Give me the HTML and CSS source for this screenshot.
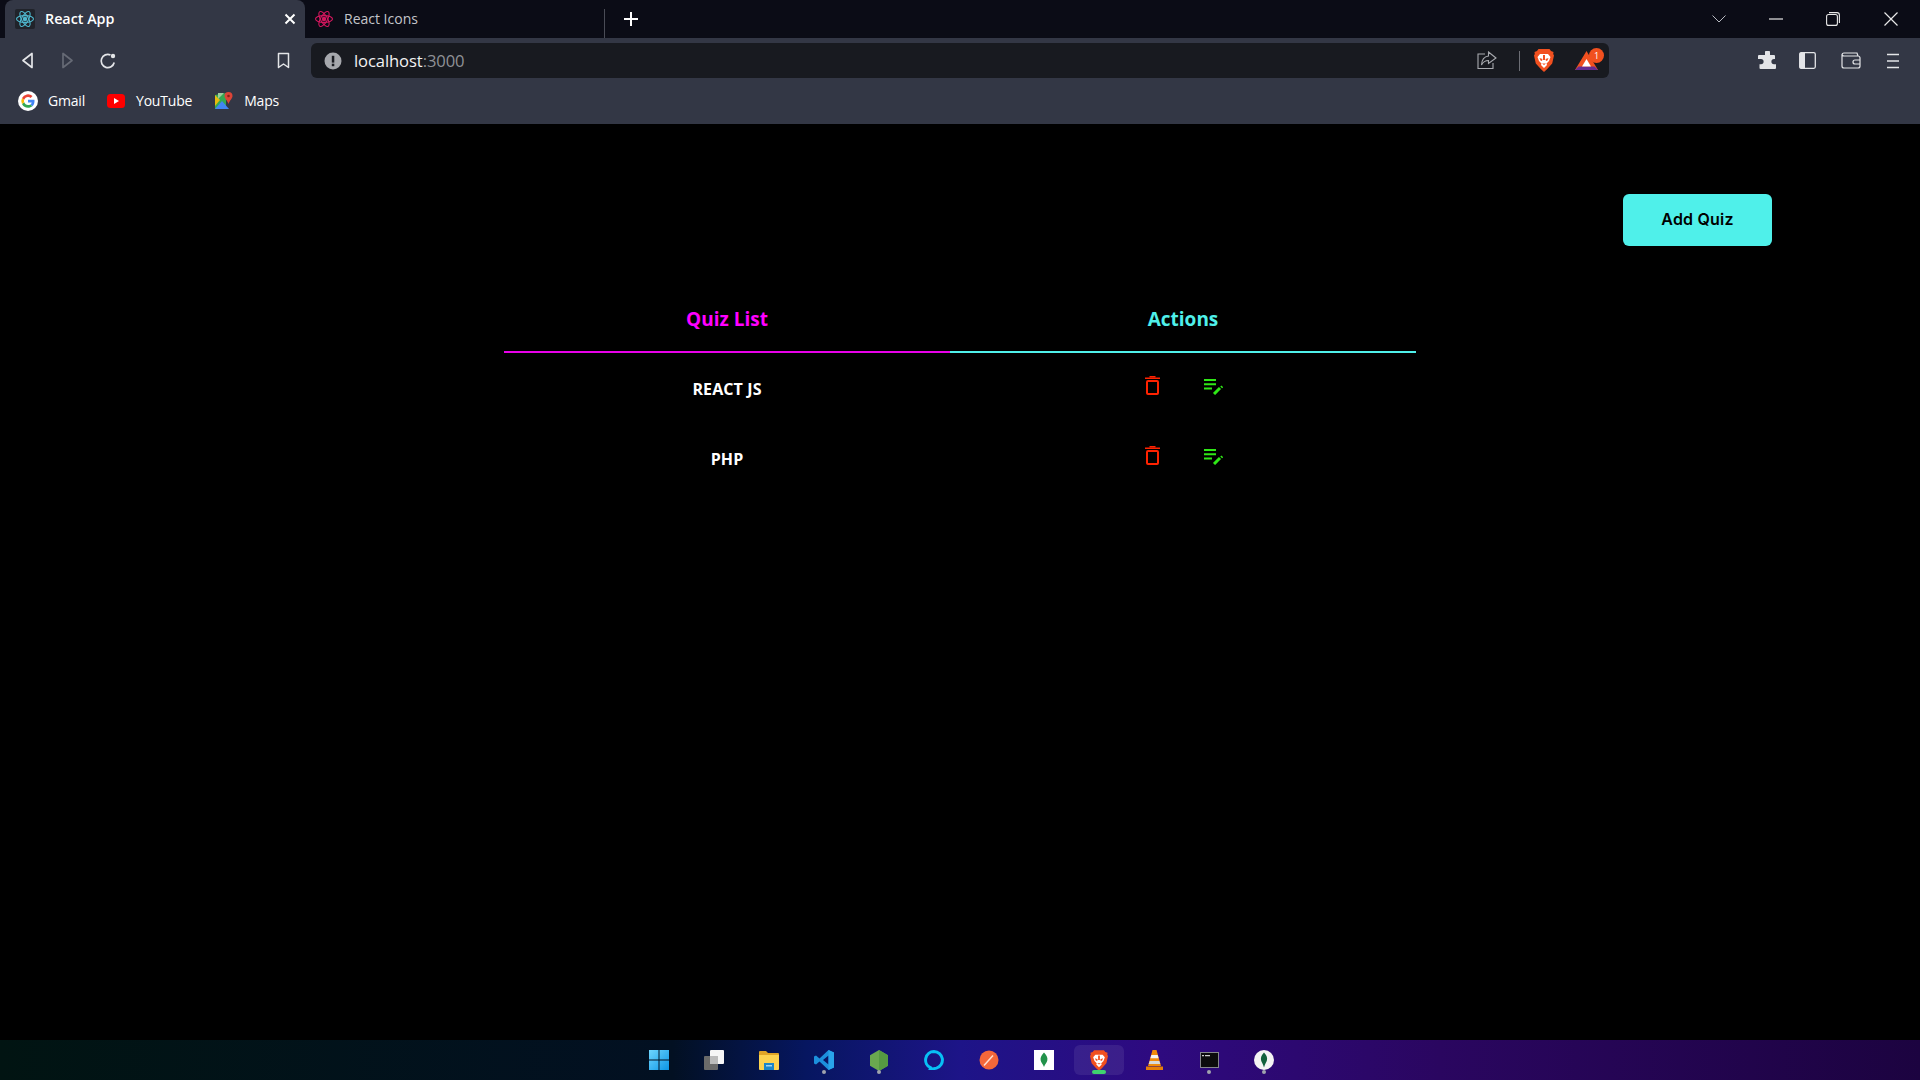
FILE: index.html
```html
<!DOCTYPE html>
<html lang="en">
<head>
    <meta charset="UTF-8">
    <meta name="viewport" content="width=device-width, initial-scale=1.0">
    <title>React App</title>
    <link rel="stylesheet" href="styles.css">
</head>
<body>
    <!-- browser chrome -->
    <div class="tab-strip">
        <div class="tab active">
            <span class="fav-box">
                <svg width="20" height="20" viewBox="0 0 20 20" fill="none" stroke="#4fb8cf" stroke-width="1.1"><ellipse cx="10" cy="10" rx="8.5" ry="3.4"/><ellipse cx="10" cy="10" rx="8.5" ry="3.4" transform="rotate(60 10 10)"/><ellipse cx="10" cy="10" rx="8.5" ry="3.4" transform="rotate(120 10 10)"/><circle cx="10" cy="10" r="1.7" fill="#4fb8cf"/></svg>
            </span>
            <span class="tab-title">React App</span>
            <svg class="tab-close" width="12" height="12" viewBox="0 0 12 12" stroke="#fff" stroke-width="2"><path d="M1.5 1.5l9 9M10.500 1.500l-9 9"/></svg>
        </div>
        <div class="tab inactive">
            <svg width="20" height="20" viewBox="0 0 20 20" fill="none" stroke="#d6175f" stroke-width="1.1"><ellipse cx="10" cy="10" rx="8.500" ry="3.400"/><ellipse cx="10" cy="10" rx="8.500" ry="3.400" transform="rotate(60 10 10)"/><ellipse cx="10" cy="10" rx="8.500" ry="3.400" transform="rotate(120 10 10)"/><circle cx="10" cy="10" r="1.700" fill="#d6175f"/></svg>
            <span class="tab-title dim">React Icons</span>
        </div>
        <div class="new-tab">
            <svg width="16" height="16" viewBox="0 0 16 16" stroke="#fff" stroke-width="2"><path d="M8 1v14M1 8h14"/></svg>
        </div>
        <div class="win-controls">
            <svg width="14" height="8" viewBox="0 0 14 8" fill="none" stroke="#b9bbc2"><path d="M.5.5L7 7l6.500-6.500"/></svg>
            <svg class="win-min" width="14" height="2" viewBox="0 0 14 2" stroke="#e8e8e8" stroke-width="1.200"><path d="M0 1h14"/></svg>
            <svg class="win-max" width="14" height="14" viewBox="0 0 14 14" fill="none" stroke="#e8e8e8" stroke-width="1.100"><rect x=".6" y="2.500" width="10.800" height="10.900" rx="2"/><path d="M3 .6h8a2.400 2.400 0 0 1 2.400 2.400v8"/></svg>
            <svg class="win-close" width="14" height="14" viewBox="0 0 14 14" stroke="#e8e8e8" stroke-width="1.200"><path d="M.5.5l13 13M13.500.5l-13 13"/></svg>
        </div>
    </div>

    <div class="toolbar">
        <div class="nav-btns">
            <svg width="13" height="17" viewBox="0 0 13 17" fill="none" stroke="#e4e5e8" stroke-width="1.700" stroke-linejoin="round"><path d="M11 1.500v14L2 8.500z"/></svg>
            <svg width="13" height="17" viewBox="0 0 13 17" fill="none" stroke="#666a75" stroke-width="1.700" stroke-linejoin="round"><path d="M2 1.500v14l9-7z"/></svg>
            <svg class="reload" width="18" height="18" viewBox="0 0 18 18" fill="none" stroke="#e4e5e8" stroke-width="1.700"><path d="M15.200 10.500A6.600 6.600 0 1 1 11.500 3"/><circle cx="14" cy="4" r="2.200" fill="#e4e5e8" stroke="none"/></svg>
            <svg class="bookmark" width="13" height="17" viewBox="0 0 13 17" fill="none" stroke="#e4e5e8" stroke-width="1.500" stroke-linejoin="round"><path d="M1.500 1.500h10v14l-5-3.500-5 3.500z"/></svg>
        </div>
        <div class="address-bar">
            <svg width="18" height="18" viewBox="0 0 18 18"><circle cx="9" cy="9" r="8.500" fill="#a6a8ad"/><rect x="7.800" y="3.800" width="2.500" height="6.800" fill="#1a1c22"/><rect x="7.800" y="11.700" width="2.500" height="2.500" fill="#1a1c22"/></svg>
            <span class="url">localhost<span class="url-port">:3000</span></span>
            <svg class="share" width="20" height="19" viewBox="0 0 20 19" fill="none" stroke="#a9abb0" stroke-width="1.100"><path d="M8 3H1v14.500h15V12"/><path d="M11.500 1l7.500 6-7.500 5.500V9.500C8 9.500 6 11 4.500 14c.3-5.500 3-8.500 7-9z"/></svg>
            <span class="addr-sep"></span>
            <svg class="brave" width="20" height="23" viewBox="0 0 20 23"><path d="M4.500 0h11L17 2l2.500 1-.3 2 .8 1.500-1.800 8-5 5.500-3.200 3-3.200-3-5-5.500-1.800-8L.8 5 .5 3 3 2z" fill="#f1501f"/><path d="M3.500 8L6 5h8l2.500 3-1.500 4-2.500 2.500.5 1.500-3 3-3-3 .5-1.500L5 12z" fill="#fff"/><path d="M5.500 9l3 1-.5 2-1.500-.5zM14.500 9l-3 1 .5 2 1.500-.5zM9 6h2v5H9zM8 14.500h4L10 16z" fill="#f1501f"/></svg>
            <span class="bat">
                <svg width="23" height="19" viewBox="0 0 23 19"><path d="M11.500 0L23 19H0z" fill="#f1501f"/><path d="M3.500 15.500h16L23 19H0z" fill="#662d91"/><path d="M11.500 8l4.500 7.500H7z" fill="#fff"/></svg>
                <span class="bat-badge">1</span>
            </span>
        </div>
        <div class="ext-btns">
            <svg width="19" height="19" viewBox="0 0 19 19" fill="#e4e5e8"><path d="M7 1.500a2.500 2.500 0 0 1 5 0V4h4a1 1 0 0 1 1 1v3h-1a2.600 2.600 0 0 0 0 5.200h2V17a1 1 0 0 1-1 1H2.500a1 1 0 0 1-1-1v-3.800H3a2.600 2.600 0 0 0 0-5.200H0V5a1 1 0 0 1 1-1h6z"/></svg>
            <svg class="ext-side" width="17" height="17" viewBox="0 0 17 17" fill="none"><rect x=".7" y=".7" width="15.600" height="15.600" rx="1.500" stroke="#e4e5e8" stroke-width="1.300"/><rect x=".7" y=".7" width="5.300" height="15.600" fill="#e4e5e8"/></svg>
            <svg class="ext-wallet" width="20" height="17" viewBox="0 0 20 17" fill="none" stroke="#e4e5e8" stroke-width="1.200"><path d="M1 3v11a2 2 0 0 0 2 2h14a2 2 0 0 0 2-2V6a2 2 0 0 0-2-2H3a2 2 0 0 1-2-1.500A2 2 0 0 1 3 1h13l1 3"/><path d="M19 8h-5a2 2 0 0 0 0 4h5"/></svg>
            <svg class="ext-menu" width="12" height="16" viewBox="0 0 12 16" stroke="#e4e5e8" stroke-width="1.400"><path d="M0 1.500h12M0 8h12M0 14.500h12"/></svg>
        </div>
    </div>

    <div class="bookmarks">
        <div class="bm first">
            <svg width="20" height="20" viewBox="0 0 20 20"><circle cx="10" cy="10" r="10" fill="#fff"/><path d="M16.500 10.200c0-.5 0-1-.1-1.400H10v2.700h3.700a3.200 3.200 0 0 1-1.400 2l2.100 1.700c1.300-1.100 2.100-2.800 2.100-5z" fill="#4285f4"/><path d="M10 16.700c1.800 0 3.300-.6 4.400-1.500l-2.100-1.700c-.6.400-1.400.6-2.300.6-1.800 0-3.200-1.200-3.800-2.800L4 12.900a6.700 6.700 0 0 0 6 3.800z" fill="#34a853"/><path d="M6.200 11.300a4 4 0 0 1 0-2.600L4 7.100a6.700 6.700 0 0 0 0 5.800z" fill="#fbbc05"/><path d="M10 6c1 0 1.900.300 2.600 1l1.900-1.900A6.700 6.700 0 0 0 4 7.100l2.200 1.600C6.800 7.200 8.200 6 10 6z" fill="#ea4335"/></svg>
            <span>Gmail</span>
        </div>
        <div class="bm">
            <svg width="18" height="14" viewBox="0 0 18 14"><rect width="18" height="14" rx="3.500" fill="#f00"/><path d="M7 4l5 3-5 3z" fill="#fff"/></svg>
            <span>YouTube</span>
        </div>
        <div class="bm">
            <svg width="18" height="18" viewBox="0 0 18 18"><path d="M0 3l11-2v16L0 17z" fill="#34a853"/><path d="M0 17l7-8 7 8z" fill="#4285f4"/><path d="M0 3l5 5-5 6z" fill="#fbbc05" opacity=".9"/><path d="M3 1h6l-6 6z" fill="#9ccc9c"/><path d="M13.500 0a4 4 0 0 1 4 4c0 2.500-3 4.500-4 8-1-3.500-4-5.500-4-8a4 4 0 0 1 4-4z" fill="#db4437"/><circle cx="13.500" cy="4" r="1.300" fill="#8c1f17"/></svg>
            <span>Maps</span>
        </div>
    </div>

    <!-- the app -->
    <main class="page">
        <div class="top-row">
            <button class="add-btn">Add Quiz</button>
        </div>
        <table class="quiz-table">
            <thead>
                <tr>
                    <th class="col-list">Quiz List</th>
                    <th class="col-actions">Actions</th>
                </tr>
            </thead>
            <tbody>
                <tr>
                    <td class="quiz-name">REACT JS</td>
                    <td class="actions">
                        <div class="action-btns">
                            <svg width="15" height="19" viewBox="0 0 15 19" fill="none" stroke="#ff2200" stroke-width="2"><path d="M4.500.6h6M0 2.200h15" stroke-width="1.500"/><rect x="2" y="5" width="11" height="13" rx="1"/></svg>
                            <svg class="icon-edit" width="19" height="16" viewBox="0 0 19 16" fill="none" stroke="#2fe816" stroke-width="2"><path d="M0 1h12M0 5.200h12M0 9.500h8"/><path d="M10 15l6-6" stroke-width="3"/><path d="M16.800 7l1.800 1.800" stroke-width="1.600"/></svg>
                        </div>
                    </td>
                </tr>
                <tr>
                    <td class="quiz-name">PHP</td>
                    <td class="actions">
                        <div class="action-btns">
                            <svg width="15" height="19" viewBox="0 0 15 19" fill="none" stroke="#ff2200" stroke-width="2"><path d="M4.500.6h6M0 2.200h15" stroke-width="1.500"/><rect x="2" y="5" width="11" height="13" rx="1"/></svg>
                            <svg class="icon-edit" width="19" height="16" viewBox="0 0 19 16" fill="none" stroke="#2fe816" stroke-width="2"><path d="M0 1h12M0 5.200h12M0 9.500h8"/><path d="M10 15l6-6" stroke-width="3"/><path d="M16.800 7l1.800 1.800" stroke-width="1.600"/></svg>
                        </div>
                    </td>
                </tr>
            </tbody>
        </table>
    </main>

    <!-- windows taskbar -->
    <footer class="taskbar">
        <div class="task">
            <svg width="20" height="20" viewBox="0 0 20 20"><defs><linearGradient id="win" x1="0" y1="0" x2="1" y2="1"><stop offset="0" stop-color="#6fd6ff"/><stop offset="1" stop-color="#0b95e4"/></linearGradient></defs><path fill="url(#win)" d="M0 0h9.500v9.500H0zM10.500 0H20v9.500h-9.500zM0 10.500h9.500V20H0zM10.500 10.500H20V20h-9.500z"/></svg>
        </div>
        <div class="task">
            <svg width="20" height="20" viewBox="0 0 20 20"><rect x="6" y="0" width="14" height="14" rx="1" fill="#f6f6f6"/><rect x="0" y="6" width="14" height="14" rx="1" fill="#6a6a6a"/><rect x="6" y="6" width="8" height="8" fill="#bcbcbc"/></svg>
        </div>
        <div class="task">
            <svg width="20" height="19" viewBox="0 0 20 19"><path d="M0 1a1 1 0 0 1 1-1h6l2 2h10a1 1 0 0 1 1 1v3H0z" fill="#e0a526"/><path d="M0 4h20v14a1 1 0 0 1-1 1H1a1 1 0 0 1-1-1z" fill="#fcd34f"/><path d="M5 12h10v7H5z" fill="#1a86c8"/><path d="M7 14h6v1.500H7z" fill="#9fd4f0"/></svg>
        </div>
        <div class="task dot">
            <svg width="20" height="20" viewBox="0 0 20 20"><path d="M14.500 0L20 2.500v15L14.500 20 5.500 11.500 2 14.500 0 13.500v-7l2-1 3.500 3zM14.500 5.500L9 10l5.500 4.500z" fill="#1c90dc"/><path d="M14.500 0L20 2.500v15L14.500 20z" fill="#29a4ea"/></svg>
        </div>
        <div class="task dot">
            <svg width="18" height="21" viewBox="0 0 18 21"><path d="M9 0l9 5.200v10.600L9 21l-9-5.200V5.200z" fill="#6aa84f"/><path d="M9 0l9 5.200v10.600L9 21z" fill="#559a42"/></svg>
        </div>
        <div class="task">
            <svg width="20" height="20" viewBox="0 0 20 20" fill="none"><path d="M10 1.500a8.500 8.500 0 0 1 2.500 16.600L6 19.500 6.500 17.700A8.500 8.500 0 0 1 10 1.500z" stroke="#08c0f5" stroke-width="3"/></svg>
        </div>
        <div class="task">
            <svg width="20" height="20" viewBox="0 0 20 20"><circle cx="10" cy="10" r="9.500" fill="#f4673a"/><path d="M5 15.500L14 5.500" stroke="#ffe0d2" stroke-width="1.500"/></svg>
        </div>
        <div class="task">
            <svg width="20" height="20" viewBox="0 0 20 20"><rect width="20" height="20" fill="#fff"/><path d="M10 2.500c3 3 3.800 5.500 3.300 8-.4 2-2.300 3.500-3.300 6.500-1-3-2.900-4.500-3.300-6.500-.5-2.500.3-5 3.300-8z" fill="#22924a"/></svg>
        </div>
        <div class="task current">
            <svg width="18" height="21" viewBox="0 0 20 23"><path d="M4.500 0h11L17 2l2.500 1-.3 2 .8 1.500-1.800 8-5 5.500-3.200 3-3.200-3-5-5.500-1.800-8L.8 5 .5 3 3 2z" fill="#f1501f"/><path d="M3.500 8L6 5h8l2.500 3-1.500 4-2.500 2.500.5 1.500-3 3-3-3 .5-1.500L5 12z" fill="#fff"/><path d="M5.500 9l3 1-.5 2-1.500-.5zM14.500 9l-3 1 .5 2 1.500-.5zM9 6h2v5H9zM8 14.500h4L10 16z" fill="#f1501f"/></svg>
            <span class="run-bar"></span>
        </div>
        <div class="task">
            <svg width="17" height="20" viewBox="0 0 17 20"><path d="M6.500 0h4L15 16H2z" fill="#f08a0c"/><path d="M5.300 5h6.400l.9 3.200H4.400z" fill="#f4f4f4"/><path d="M3.600 11h9.800l.9 3H2.700z" fill="#d8d8d8"/><path d="M0 16.500h17V20H0z" fill="#e67e08"/></svg>
        </div>
        <div class="task dot">
            <svg width="19" height="16" viewBox="0 0 19 16"><rect width="19" height="16" fill="#0c0c0c"/><rect x=".5" y=".5" width="18" height="15" fill="none" stroke="#85878c"/><path d="M2 3h2v1.200H2zM5 3h5v1.200H5z" fill="#ccc"/></svg>
        </div>
        <div class="task dot">
            <svg width="20" height="20" viewBox="0 0 20 20"><circle cx="10" cy="10" r="10" fill="#f4f4f4"/><path d="M10 2.500c2.500 2.500 3.500 5 3 7.500-.3 2-2 3.500-3 7.500-1-4-2.700-5.500-3-7.500-.5-2.500.5-5 3-7.500z" fill="#12613c"/></svg>
        </div>
    </footer>
</body>
</html>
```
FILE: styles.css
```css
* {
    box-sizing: border-box;
}
html, body {
    margin: 0;
    height: 100%;
}
body {
    width: 1920px;
    height: 1080px;
    overflow: hidden;
    display: flex;
    flex-direction: column;
    background-color: #000;
    font-family: "Open Sans", "Noto Sans", sans-serif;
    color: #fff;
}
svg {
    display: block;
    flex: none;
}

/* tabs */
.tab-strip {
    height: 38px;
    display: flex;
    background-color: #0b0c16;
}
.tab {
    height: 38px;
    display: flex;
    align-items: center;
}
.active {
    width: 300px;
    margin-left: 5px;
    padding: 0 9px 0 10px;
    background-color: #333745;
    border-radius: 8px 8px 0 0;
}
.inactive {
    width: 300px;
    padding-left: 9px;
    position: relative;
}
.inactive::after {
    content: "";
    position: absolute;
    right: 0;
    top: 9px;
    bottom: 0;
    width: 1px;
    background-color: #4a4c56;
}
.fav-box {
    width: 20px;
    height: 20px;
    background-color: #20232a;
    border-radius: 2px;
}
.tab-title {
    margin-left: 10px;
    padding-bottom: 2px;
    font-size: 14.3px;
    font-weight: 600;
}
.tab-title.dim {
    margin-left: 10px;
    font-size: 14px;
    font-weight: 400;
    color: #c3c5ca;
}
.tab-close {
    margin-left: auto;
}
.new-tab {
    width: 16px;
    margin-left: 18px;
    display: flex;
    align-items: center;
}
.win-controls {
    margin-left: auto;
    display: flex;
    align-items: center;
    padding-right: 22px;
}
.win-min {
    margin-left: 43px;
}
.win-max {
    margin-left: 43px;
}
.win-close {
    margin-left: 44px;
}

/* toolbar */
.toolbar {
    height: 48px;
    padding-top: 5px;
    padding-bottom: 8px;
    display: flex;
    background-color: #333745;
}
.nav-btns {
    width: 311px;
    padding-left: 21px;
    display: flex;
    align-items: center;
    gap: 27px;
}
.reload {
    margin-left: -2px;
}
.bookmark {
    margin-left: 133px;
}
.address-bar {
    width: 1298px;
    height: 35px;
    padding: 0 11px 0 13px;
    display: flex;
    align-items: center;
    background-color: #181a20;
    border-radius: 6px;
}
.url {
    margin-left: 12px;
    font-size: 16.6px;
    letter-spacing: -0.1px;
    color: #f2f2f2;
}
.url-port {
    color: #8f9196;
}
.share {
    margin-left: auto;
}
.addr-sep {
    width: 1px;
    height: 20px;
    margin-left: 22px;
    background-color: #6c6e75;
}
.brave {
    margin-left: 14px;
}
.bat {
    position: relative;
    margin-left: 21px;
}
.bat-badge {
    position: absolute;
    top: -3px;
    right: -6px;
    width: 15px;
    height: 15px;
    border-radius: 50%;
    background-color: #f1501f;
    font-size: 9px;
    line-height: 15px;
    text-align: center;
}
.ext-btns {
    flex: 1;
    padding-left: 149px;
    display: flex;
    align-items: center;
}
.ext-side {
    margin-left: 22px;
}
.ext-wallet {
    margin-left: 25px;
}
.ext-menu {
    margin-left: 26px;
}

/* bookmarks */
.bookmarks {
    height: 38px;
    padding: 0 0 8px 18px;
    display: flex;
    align-items: center;
    background-color: #333745;
    font-size: 14px;
    letter-spacing: -0.2px;
}
.bm {
    display: flex;
    align-items: center;
    gap: 11px;
    margin-right: 23px;
}
.bm span {
    padding-bottom: 2px;
}
.first {
    gap: 10px;
    margin-right: 22px;
}

/* page */
.page {
    flex: 1;
    display: flex;
    flex-direction: column;
    align-items: center;
    background-color: #000;
}
.top-row {
    width: 100%;
    padding: 70px 148px 0 0;
    display: flex;
    justify-content: flex-end;
}
.add-btn {
    width: 149px;
    height: 52px;
    padding: 0 0 2px;
    border: none;
    border-radius: 6px;
    background-color: #4ff0ea;
    color: #000;
    font-family: Inter, sans-serif;
    font-size: 16px;
    font-weight: 600;
    letter-spacing: 0.2px;
}
.quiz-table {
    width: 912px;
    margin-top: 46px;
    border-collapse: separate;
    border-spacing: 0;
}
th {
    height: 61px;
    padding: 0 0 6px;
    font-size: 19px;
    font-weight: 700;
}
.col-list {
    width: 446px;
    color: #f0f;
    border-bottom: 2px solid #e800e8;
}
.col-actions {
    color: #4ff0ea;
    border-bottom: 2px solid #4ff0ea;
}
td {
    height: 70px;
    padding: 0;
}
.quiz-name {
    padding-top: 2px;
    text-align: center;
    font-size: 16px;
    font-weight: 700;
    letter-spacing: 0.1px;
}
.actions {
    vertical-align: top;
    padding-top: 23px;
}
.action-btns {
    display: flex;
    gap: 44px;
    padding-left: 195px;
}
.icon-edit {
    margin-top: 3px;
}

/* taskbar */
.taskbar {
    height: 40px;
    padding-left: 634px;
    display: flex;
    align-items: center;
    gap: 5px;
    background: linear-gradient(90deg, #011412 0%, #021022 35%, #061660 42%, #1d1488 50%, #2e0a80 60%, #2a0660 75%, #1c0340 100%);
}
.task {
    position: relative;
    width: 50px;
    height: 30px;
    display: flex;
    align-items: center;
    justify-content: center;
}
.dot::after {
    content: "";
    position: absolute;
    left: 23px;
    bottom: 1px;
    width: 4px;
    height: 4px;
    border-radius: 50%;
    background-color: #a0a3ad;
}
.current {
    background-color: rgba(255, 255, 255, 0.08);
    border-radius: 6px;
}
.run-bar {
    position: absolute;
    left: 18px;
    bottom: 1px;
    width: 14px;
    height: 4px;
    border-radius: 2px;
    background-color: #3fd26f;
}
```
